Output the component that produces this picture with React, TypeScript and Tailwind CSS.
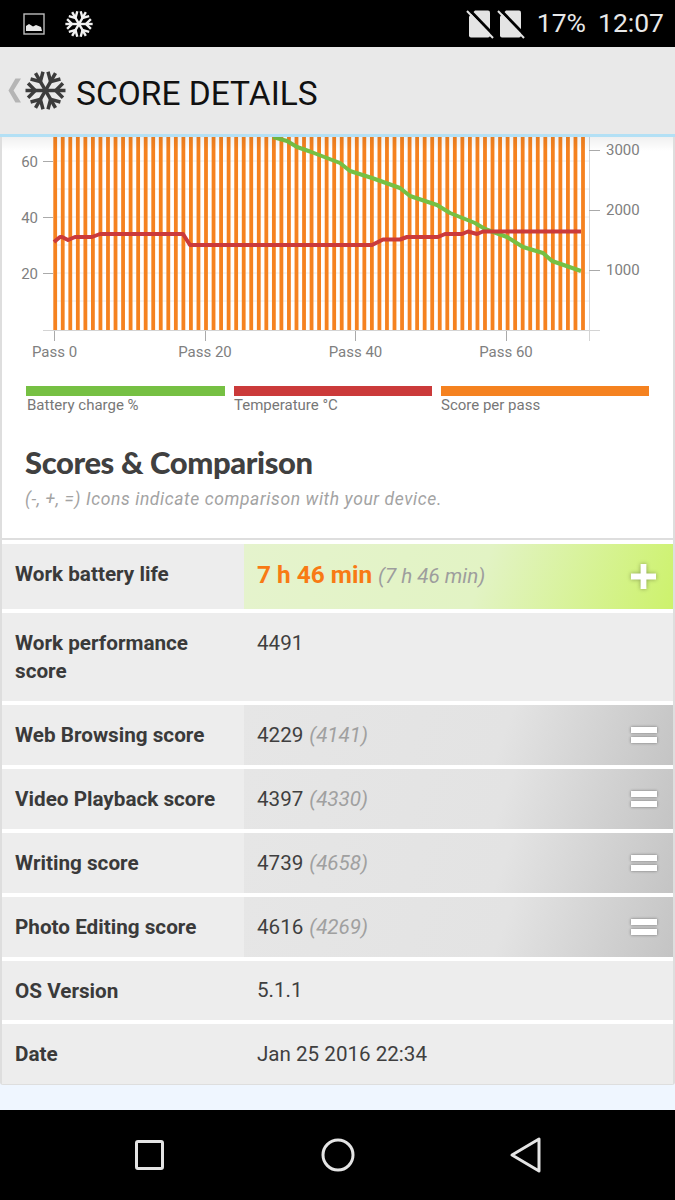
const passes = Array.from({ length: 71 }, (_, i) => i);

const greenLine =
  "273,137 287,141 297,147 310,151.5 340,163 350,171 372,178 400,188 410,196 437,205 450,213 475,223 485,229 507,237 523,247 543,253 552,261 581,271";
const redLine =
  "54,242 60,237 62,237 68,240 75,237 92,237 100,234 183,234 190,245 372,245 383,239.5 400,239.5 407,237 438,237 445,234 462,234 468,231.5 477,234 483,231.5 581,231.5";

function Snowflake({ className, color }: { className: string; color: string }) {
  return (
    <svg viewBox="0 0 40 40" className={className} fill="none" stroke={color} strokeWidth="3.4" strokeLinecap="butt">
      {[30, 90, 150].map((a) => (
        <g key={a} transform={`rotate(${a} 20 20)`}>
          <path d="M20 0.5V39.5" />
          <path d="M13 3L20 10L27 3" />
          <path d="M13 37L20 30L27 37" />
        </g>
      ))}
    </svg>
  );
}

function NoSim() {
  return (
    <svg viewBox="0 0 28 30" className="w-[28px] h-[30px]">
      <path d="M9 1.5H22a2 2 0 0 1 2 2V26.5a2 2 0 0 1-2 2H5a2 2 0 0 1-2-2V7.5z" fill="#e4e4e4" />
      <path d="M3 0.5L28 26.5" stroke="#000" strokeWidth="3" />
      <path d="M1 2L27 29" stroke="#e4e4e4" strokeWidth="2" />
    </svg>
  );
}

function Chart() {
  return (
    <svg width="671" height="234" viewBox="2 137 671 234" className="block shrink-0">
      <defs>
        <linearGradient id="topfade" x1="0" y1="0" x2="0" y2="1">
          <stop offset="0" stopColor="#000" stopOpacity="0.06" />
          <stop offset="1" stopColor="#000" stopOpacity="0" />
        </linearGradient>
      </defs>
      {[161, 189, 217, 245, 273, 301].map((y) => (
        <line key={y} x1="54" x2="589" y1={y} y2={y} stroke="#ececec" strokeWidth="1" />
      ))}
      {passes.map((i) => (
        <rect key={i} x={53.3 + i * 7.54} y="137" width="3.8" height="193" fill="#f58220" />
      ))}
      <line x1="43" x2="600" y1="330.5" y2="330.5" stroke="#d4d4d4" />
      <line x1="589.5" x2="589.5" y1="137" y2="341" stroke="#d4d4d4" />
      {[161, 217, 273].map((y) => (
        <line key={y} x1="43" x2="53" y1={y + 0.5} y2={y + 0.5} stroke="#aaaaaa" />
      ))}
      {[150, 210, 270].map((y) => (
        <line key={y} x1="589" x2="600" y1={y + 0.5} y2={y + 0.5} stroke="#aaaaaa" />
      ))}
      {[54.5, 205.5, 355.5, 506.5].map((x) => (
        <line key={x} x1={x} x2={x} y1="331" y2="341" stroke="#aaaaaa" />
      ))}
      <polyline points={greenLine} fill="none" stroke="#76c043" strokeWidth="4" strokeLinejoin="round" />
      <polyline points={redLine} fill="none" stroke="#cb3a3a" strokeWidth="4" strokeLinejoin="round" />
      <rect x="2" y="137" width="671" height="14" fill="url(#topfade)" />
      <g fontFamily="Roboto, sans-serif" fontSize="15" fill="#808080">
        <text x="38" y="167" textAnchor="end">60</text>
        <text x="38" y="223" textAnchor="end">40</text>
        <text x="38" y="279" textAnchor="end">20</text>
        <text x="606" y="155">3000</text>
        <text x="606" y="215">2000</text>
        <text x="606" y="275">1000</text>
      </g>
      <g fontFamily="Roboto, sans-serif" fontSize="15" fill="#808080" textAnchor="middle">
        <text x="54.5" y="357">Pass 0</text>
        <text x="205" y="357">Pass 20</text>
        <text x="355.5" y="357">Pass 40</text>
        <text x="506" y="357">Pass 60</text>
      </g>
    </svg>
  );
}

const legend = [
  { label: "Battery charge %", bar: "bg-[#76c043]", width: "w-[199px]", pad: "pl-[1px]" },
  { label: "Temperature °C", bar: "bg-[#cb3a3a]", width: "w-[198px]", pad: "" },
  { label: "Score per pass", bar: "bg-[#f58220]", width: "w-[208px]", pad: "" },
];

type Row = {
  label: string;
  value: string;
  ref?: string;
  top?: boolean;
  height: string;
};

const rows: Row[] = [
  { label: "Work performance score", value: "4491", top: true, height: "h-[88px]" },
  { label: "Web Browsing score", value: "4229", ref: "(4141)", height: "h-[60px]" },
  { label: "Video Playback score", value: "4397", ref: "(4330)", height: "h-[60px]" },
  { label: "Writing score", value: "4739", ref: "(4658)", height: "h-[60px]" },
  { label: "Photo Editing score", value: "4616", ref: "(4269)", height: "h-[60px]" },
  { label: "OS Version", value: "5.1.1", height: "h-[59px]" },
  { label: "Date", value: "Jan 25 2016 22:34", height: "h-[60px]" },
];

function ScoreRow({ row }: { row: Row }) {
  return (
    <div className={`flex ${row.height} bg-[#ededed]`}>
      <div className="w-[242px] shrink-0 flex items-center pl-[13px] pr-2 text-[20.7px] leading-[28px] font-bold text-[#3a3a3a]">
        {row.label}
      </div>
      <div
        className={`flex-1 flex pl-[13px] pr-[16px] justify-between text-[20.6px] text-[#3f3f3f] ${
          row.top ? "pt-[15px]" : "items-center"
        } ${row.ref ? "bg-[linear-gradient(110deg,#e6e6e6_0%,#e3e3e3_60%,#c4c4c4_100%)]" : ""}`}
      >
        <span>
          {row.value}
          {row.ref && <span className="ml-[6px] italic text-[#a0a0a0]">{row.ref}</span>}
        </span>
        {row.ref && (
          <span className="flex flex-col gap-[4px] w-[26px]">
            <span className="h-[6px] bg-white shadow-[0_0_3px_rgba(0,0,0,0.45)]" />
            <span className="h-[6px] bg-white shadow-[0_0_3px_rgba(0,0,0,0.45)]" />
          </span>
        )}
      </div>
    </div>
  );
}

export default function App() {
  return (
    <div className="w-[675px] h-[1200px] flex flex-col bg-[#eff6ff] overflow-hidden font-['Roboto',sans-serif]">
      {/* status bar */}
      <div className="h-[47px] shrink-0 bg-black flex items-center pl-[23px] pr-[11px] text-[#e8e8e8]">
        <svg viewBox="0 0 22 22" className="w-[22px] h-[22px]">
          <rect x="1" y="1" width="20" height="20" fill="none" stroke="#bdbdbd" strokeWidth="1.4" />
          <path d="M3 18V13L6 11L10 13.5L13 12L18 14L19 18z" fill="#e8e8e8" />
        </svg>
        <Snowflake className="w-[28px] h-[28px] ml-[20px]" color="#f0f0f0" />
        <div className="ml-auto flex items-center">
          <NoSim />
          <span className="ml-[3px]"><NoSim /></span>
          <span className="ml-[12px] text-[26.5px] leading-none">17%</span>
          <span className="ml-[12px] text-[26.5px] leading-none">12:07</span>
        </div>
      </div>

      {/* header */}
      <div className="h-[90px] shrink-0 bg-[#e9e9e9] border-b-[3px] border-[#b3e0f5] flex items-center pl-[8px]">
        <svg viewBox="0 0 14 28" className="w-[13px] h-[27px] mb-[1px]">
          <path d="M14 1L6 14L14 27H8L0.5 14L8 1z" fill="#b5b5b5" />
        </svg>
        <Snowflake className="w-[41px] h-[41px] ml-[4px]" color="#3c3c3c" />
        <span className="ml-[10px] pt-[8px] text-[33.5px] text-[#111]">SCORE DETAILS</span>
      </div>

      {/* card */}
      <div className="h-[948px] shrink-0 flex flex-col bg-white border-x-2 border-b border-[#dedede] rounded-b-[3px]">
        <Chart />

        <div className="flex gap-[9px] pl-[24px] mt-[15px]">
          {legend.map((l) => (
            <div key={l.label} className={l.width}>
              <div className={`h-[10px] ${l.bar}`} />
              <div className="text-[15px] leading-[18px] text-[#777]">
                <span className={l.pad}>{l.label}</span>
              </div>
            </div>
          ))}
        </div>

        <h2 className="mt-[29px] pl-[23px] text-[31px] leading-[38px] font-black tracking-[-0.4px] text-[#404040] font-['Lato',sans-serif]">
          Scores &amp; Comparison
        </h2>
        <p className="mt-[7px] pl-[23px] text-[17.5px] leading-[22px] italic tracking-[0.6px] text-[#a3a3a3]">
          (-, +, =) Icons indicate comparison with your device.
        </p>

        <div className="mt-[28px] h-[2px] bg-[#dedede]" />

        <div className="flex flex-col gap-[4px] pt-[4px]">
          <div className="flex h-[65px] bg-[#ededed]">
            <div className="w-[242px] shrink-0 flex items-center pl-[13px] pb-[4px] text-[20.7px] font-bold text-[#3a3a3a]">
              Work battery life
            </div>
            <div className="flex-1 flex items-center justify-between pl-[13px] pr-[16px] bg-[linear-gradient(110deg,#e5f3cd_0%,#e2f3c4_55%,#cdf26c_100%)]">
              <span className="pb-[3px]">
                <span className="text-[24.4px] font-bold text-[#f87a14]">7 h 46 min</span>
                <span className="ml-[6px] text-[20.6px] italic text-[#9d9d9d]">(7 h 46 min)</span>
              </span>
              <svg viewBox="0 0 28 28" className="w-[27px] h-[27px] drop-shadow-[0_0_2px_rgba(0,0,0,0.35)]">
                <path d="M11 1H17V11H27V17H17V27H11V17H1V11H11z" fill="#fff" />
              </svg>
            </div>
          </div>
          {rows.map((r) => (
            <ScoreRow key={r.label} row={r} />
          ))}
        </div>
      </div>

      <div className="flex-1" />

      {/* nav bar */}
      <div className="h-[90px] shrink-0 bg-black flex items-center">
        <svg width="675" height="90" viewBox="0 0 675 90" fill="none" stroke="#e4e4e4" strokeWidth="3">
          <rect x="136.5" y="31.5" width="26" height="27" rx="1.5" />
          <circle cx="338" cy="45" r="15" />
          <path d="M539 29V61L512 45z" strokeLinejoin="round" />
        </svg>
      </div>
    </div>
  );
}
